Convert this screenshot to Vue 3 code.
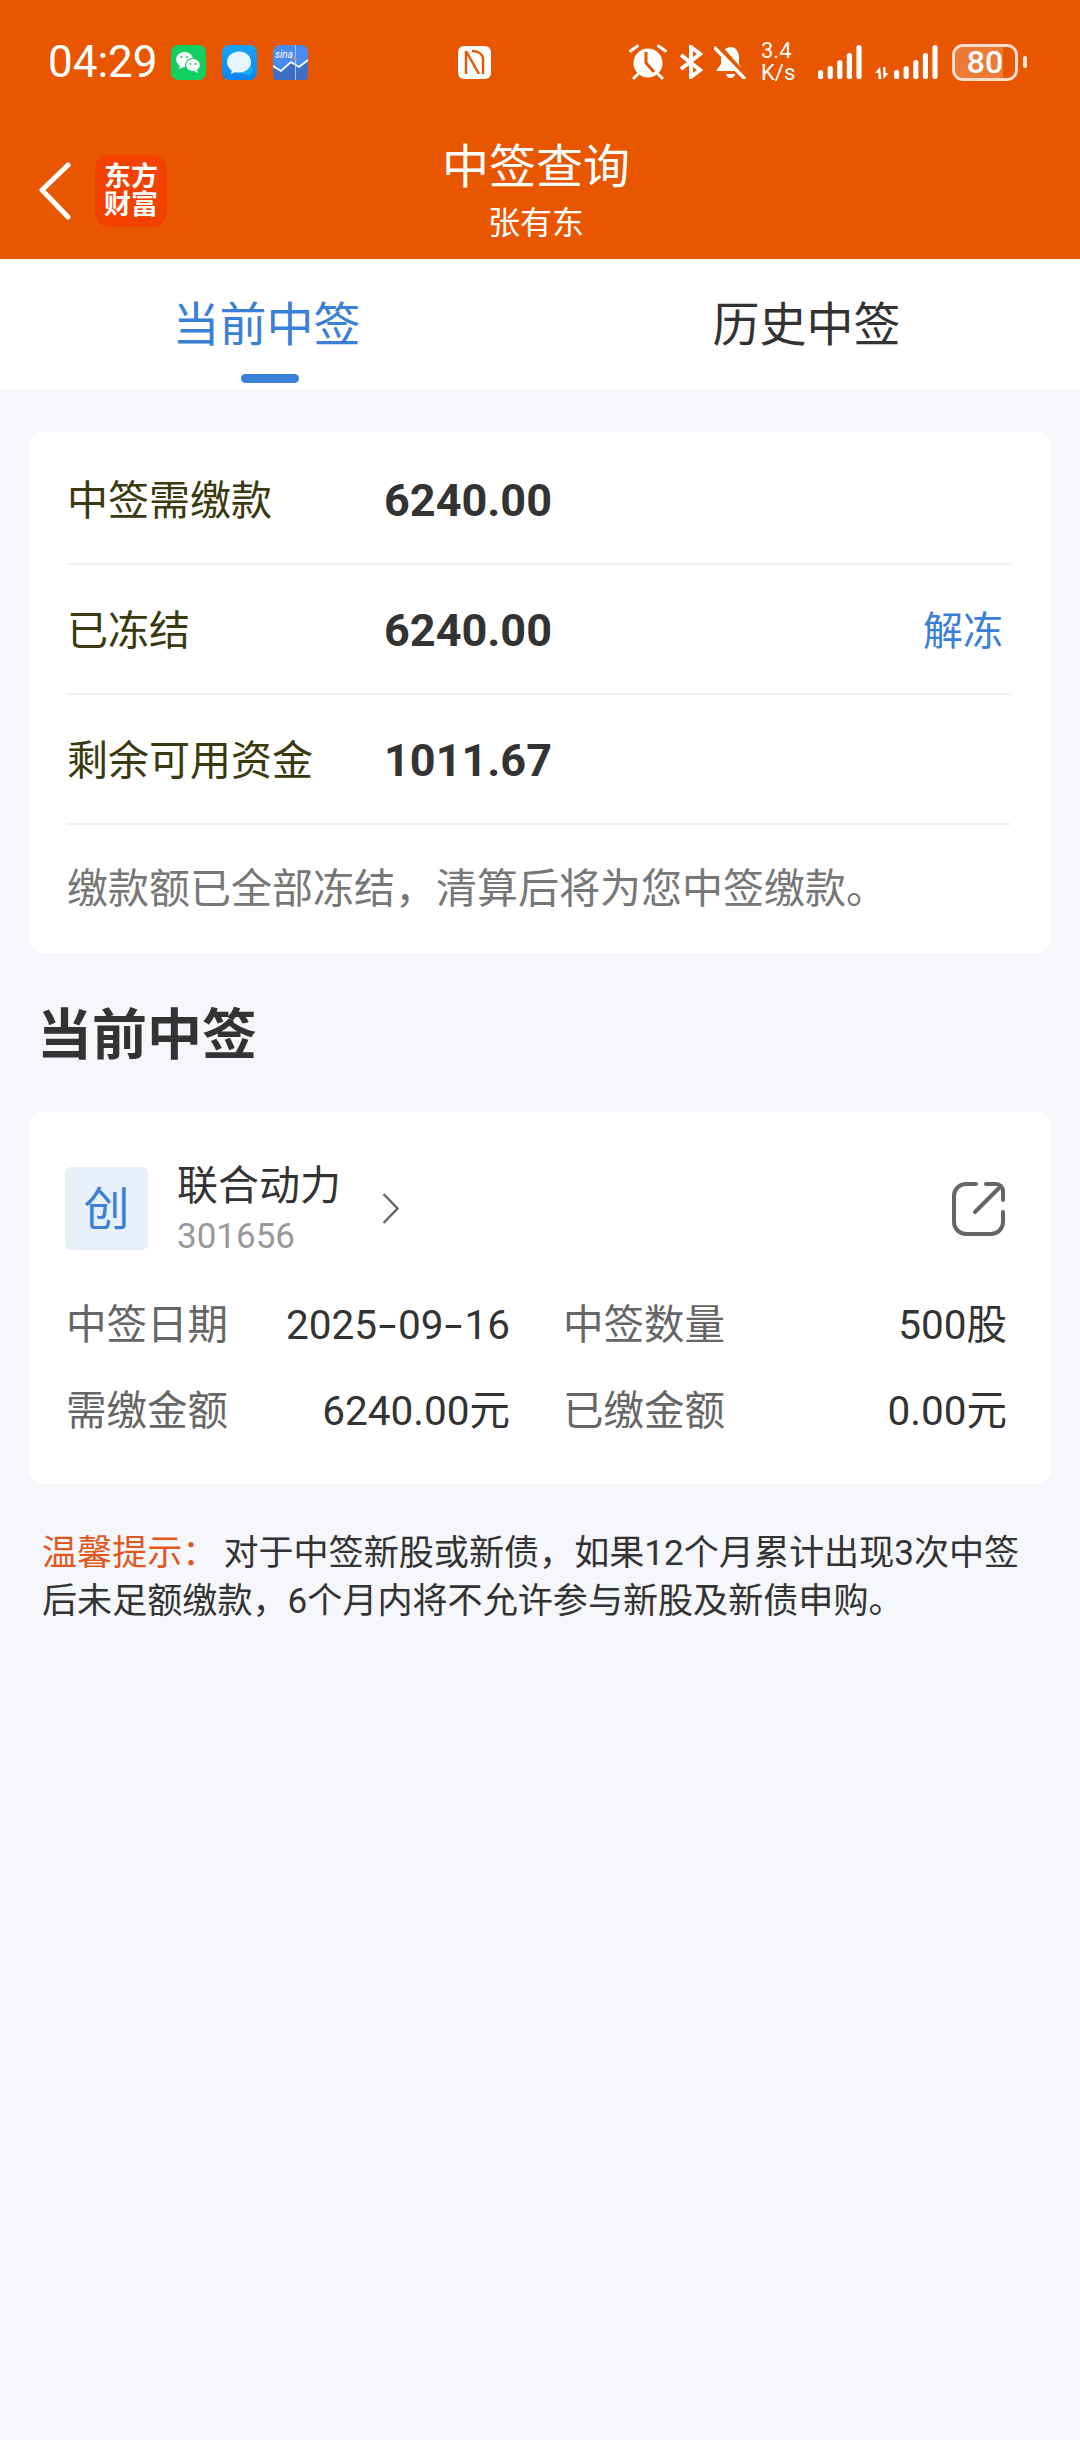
<script setup>
const battery = 80

const signalBars = [
  { x: 0, h: 9 },
  { x: 9.6, h: 13 },
  { x: 19.2, h: 19 },
  { x: 28.8, h: 26 },
  { x: 38.4, h: 34 }
]

const summary = [
  { label: '中签需缴款', value: '6240.00' },
  { label: '已冻结', value: '6240.00', action: '解冻' },
  { label: '剩余可用资金', value: '1011.67' }
]

const details = [
  { label: '中签日期', value: '2025-09-16' },
  { label: '中签数量', value: '500股' },
  { label: '需缴金额', value: '6240.00元' },
  { label: '已缴金额', value: '0.00元' }
]
</script>

<template>
  <div class="page">
    <header class="header">
      <div class="statusbar">
        <span class="time">04:29</span>

        <svg class="app-icon first" viewBox="0 0 35 35">
          <rect width="35" height="35" rx="7" fill="#12cf62" />
          <ellipse cx="13.5" cy="14.5" rx="8.5" ry="7.5" fill="#fff" />
          <path d="M9 20l-1 4 5-2z" fill="#fff" />
          <ellipse cx="22" cy="20" rx="7.5" ry="6.5" fill="#fff" stroke="#12cf62" stroke-width="1.2" />
          <path d="M26 25l1 3-4-2z" fill="#fff" />
          <circle cx="10.5" cy="12" r="1.1" fill="#12cf62" />
          <circle cx="16" cy="12" r="1.1" fill="#12cf62" />
          <circle cx="19.5" cy="19" r="1" fill="#12cf62" />
          <circle cx="24.5" cy="19" r="1" fill="#12cf62" />
        </svg>

        <svg class="app-icon" viewBox="0 0 35 35">
          <defs>
            <linearGradient id="msgBg" x1="0" y1="0" x2="0" y2="1">
              <stop offset="0" stop-color="#18a4f8" />
              <stop offset="1" stop-color="#0a86f0" />
            </linearGradient>
          </defs>
          <rect width="35" height="35" rx="7" fill="url(#msgBg)" />
          <ellipse cx="24" cy="24" rx="6.5" ry="5.5" fill="#12b2f0" />
          <path d="M27 27l3 3-6-1z" fill="#12b2f0" />
          <ellipse cx="17" cy="17" rx="12" ry="10.5" fill="#e6f5fe" />
          <path d="M10 24l-1 5 7-3z" fill="#e6f5fe" />
        </svg>

        <svg class="app-icon" viewBox="0 0 35 35">
          <rect width="35" height="35" rx="7" fill="#4b8bf0" />
          <path d="M0 23l8 4 10-10 8 6 9-7v14a7 7 0 0 1-7 7H7a7 7 0 0 1-7-7z" fill="#3f6fc4" />
          <path d="M0 21l8 5 10-9 8 5 9-7" fill="none" stroke="#fff" stroke-width="1.8" />
          <path d="M22.5 0v35" stroke="#c9d6ee" stroke-width="0.8" />
          <circle cx="22.5" cy="14" r="1.6" fill="#d69a55" />
          <text x="2" y="13" class="sina">sina</text>
        </svg>

        <svg class="nfc" viewBox="0 0 33 33">
          <rect width="33" height="33" rx="6" fill="#fff" />
          <path d="M8 5v23M8 5l13 23M14 5c6 0 11 3 11 8v15" fill="none" stroke="#e85600" stroke-width="2.4" />
        </svg>

        <div class="status-right">
          <svg class="alarm" viewBox="0 0 38 36">
            <circle cx="19" cy="19" r="14.5" fill="#fff" />
            <path d="M17 8v11l8 9" fill="none" stroke="#e85600" stroke-width="3" />
            <path d="M1.500 7l7-5M36.500 7l-7-5M5 34l3.500-3.500M33 34l-3.500-3.500" stroke="#fff" stroke-width="3" stroke-linecap="round" />
          </svg>

          <svg class="bt" viewBox="0 0 26 34">
            <path d="M3 10l19 15-9 7V2l9 7L3 24" fill="none" stroke="#fff" stroke-width="4" />
          </svg>

          <svg class="bell" viewBox="0 0 32 34">
            <path d="M17 2c-6 0-10 5-10 11v6l-5 7h27l-4-7v-6c0-6-3-11-8-11z" fill="#fff" />
            <path d="M12 29a4.500 4 0 0 0 9 0z" fill="#fff" />
            <path d="M3 1l28 31" stroke="#e85600" stroke-width="7" />
            <path d="M1 3l29 30" stroke="#fff" stroke-width="3.500" stroke-linecap="round" />
          </svg>

          <div class="speed">
            <span>3.4</span>
            <span>K/s</span>
          </div>

          <svg class="signal" viewBox="0 0 44 34">
            <rect v-for="b in signalBars" :key="b.x" :x="b.x" :y="34 - b.h" width="5.200" :height="b.h" rx="2.600" fill="#fff" />
          </svg>

          <svg class="signal-data" viewBox="0 0 64 34">
            <path d="M5 22l-5 6H3.500v6H6.500zM8.500 34l5-6H10.500V22H8z" fill="#fff" />
            <g transform="translate(19 0)">
              <rect v-for="b in signalBars" :key="b.x" :x="b.x" :y="34 - b.h" width="5.200" :height="b.h" rx="2.600" fill="#fff" />
            </g>
          </svg>

          <div class="battery">
            <div class="battery-fill" :style="{ width: battery + '%' }"></div>
            <span class="battery-num">{{ battery }}</span>
          </div>
          <div class="battery-tip"></div>
        </div>
      </div>

      <nav class="nav">
        <div class="nav-left">
          <svg class="back" viewBox="0 0 34 58">
            <path d="M30 3L4 28l26 27" fill="none" stroke="#fff" stroke-width="5" stroke-linecap="round" stroke-linejoin="round" />
          </svg>
          <div class="logo">
            <span>东方</span>
            <span>财富</span>
          </div>
        </div>
        <div class="nav-title">
          <div class="title">中签查询</div>
          <div class="subtitle">张有东</div>
        </div>
        <div></div>
      </nav>
    </header>

    <div class="tabs">
      <div class="tab active">
        <span class="tab-text">当前中签</span>
        <i class="tab-bar"></i>
      </div>
      <div class="tab">
        <span class="tab-text">历史中签</span>
      </div>
    </div>

    <section class="card summary">
      <div v-for="row in summary" :key="row.label" class="sum-row">
        <span class="sum-label">{{ row.label }}</span>
        <span class="sum-value">{{ row.value }}</span>
        <span v-if="row.action" class="sum-action">{{ row.action }}</span>
      </div>
      <div class="sum-note">缴款额已全部冻结，清算后将为您中签缴款。</div>
    </section>

    <h2 class="section-title">当前中签</h2>

    <section class="card stock">
      <div class="stock-head">
        <div class="badge">创</div>
        <div class="stock-name">
          <div class="name">联合动力</div>
          <div class="code">301656</div>
        </div>
        <svg class="chevron" viewBox="0 0 17 31">
          <path d="M1.500 1l14 14.500-14 14.500" fill="none" stroke="#666" stroke-width="2.400" />
        </svg>
        <svg class="share" viewBox="0 0 53 54">
          <path d="M24 2H14A12 12 0 0 0 2 14v26a12 12 0 0 0 12 12h25a12 12 0 0 0 12-12V30M34 2h10a7 7 0 0 1 7 7v9M23 30L49 4" fill="none" stroke="#666" stroke-width="4" stroke-linecap="round" />
        </svg>
      </div>
      <div class="detail-grid">
        <div v-for="d in details" :key="d.label" class="detail">
          <span class="detail-label">{{ d.label }}</span>
          <!-- hyphens in the date are drawn wider than the font's own -->
          <span class="detail-value"><template v-for="(part, i) in d.value.split('-')" :key="i"><span v-if="i" class="dash">-</span>{{ part }}</template></span>
        </div>
      </div>
    </section>

    <p class="tip"><span class="tip-label">温馨提示：</span>对于中签新股或新债，如果12个月累计出现3次中签后未足额缴款，6个月内将不允许参与新股及新债申购。</p>
  </div>
</template>

<style>
html,
body {
  margin: 0;
  background: #f6f7fa;
}
</style>

<style scoped>
.page {
  min-height: 2440px;
  background: #f6f7fa;
  font-family: Roboto, "Noto Sans CJK SC", sans-serif;
  color: #333;
  overflow: hidden;
}

.header {
  height: 259px;
  background: #e85600;
  color: #fff;
}

.statusbar {
  display: flex;
  align-items: center;
  height: 36px;
  padding: 44px 53px 30px 48px;
}

.time {
  font-size: 44px;
  font-weight: 400;
  line-height: 36px;
  width: 109px;
}

.app-icon {
  width: 35px;
  height: 35px;
  margin-left: 16px;
}

.app-icon.first {
  margin-left: 14px;
}

.sina {
  font-size: 10px;
  font-style: italic;
  fill: #fff;
}

.nfc {
  width: 33px;
  height: 33px;
  margin-left: 150px;
}

.status-right {
  display: flex;
  align-items: center;
  margin-left: auto;
}

.alarm {
  width: 38px;
  height: 36px;
}

.bt {
  width: 26px;
  height: 34px;
  margin-left: 11px;
}

.bell {
  width: 32px;
  height: 34px;
  margin-left: 10px;
}

.speed {
  display: flex;
  flex-direction: column;
  width: 36px;
  margin-left: 15px;
  font-size: 22px;
  line-height: 22px;
}

.signal {
  width: 44px;
  height: 34px;
  margin-left: 21px;
}

.signal-data {
  width: 64px;
  height: 34px;
  margin-left: 13px;
}

.battery {
  position: relative;
  width: 66px;
  height: 37px;
  margin-left: 13px;
  box-sizing: border-box;
  border: 3px solid rgba(255, 255, 255, 0.8);
  border-radius: 11px;
  display: flex;
  align-items: center;
  justify-content: center;
  overflow: hidden;
}

.battery-fill {
  position: absolute;
  left: 0;
  top: 0;
  bottom: 0;
  background: rgba(255, 255, 255, 0.22);
}

.battery-num {
  position: relative;
  font-size: 32px;
  font-weight: 500;
  line-height: 1;
}

.battery-tip {
  width: 4px;
  height: 12px;
  margin-left: 5px;
  border-radius: 2px;
  background: rgba(255, 255, 255, 0.85);
}

.nav {
  display: grid;
  grid-template-columns: 1fr auto 1fr;
  height: 149px;
  padding-right: 8px;
}

.nav-left {
  display: flex;
  align-items: center;
  height: 149px;
  box-sizing: border-box;
  padding: 12px 0 0 38px;
}

.back {
  width: 34px;
  height: 58px;
}

.logo {
  display: flex;
  flex-direction: column;
  align-items: center;
  justify-content: center;
  width: 72px;
  height: 72px;
  margin-left: 23px;
  border-radius: 14px;
  background: #f34100;
  font-size: 27px;
  font-weight: 700;
  line-height: 28px;
}

.nav-title {
  text-align: center;
  padding-top: 32px;
}

.title {
  font-size: 47px;
  line-height: 50px;
}

.subtitle {
  font-size: 32px;
  line-height: 36px;
  margin-top: 13px;
}

.tabs {
  display: flex;
  height: 130px;
  background: #fff;
}

.tab {
  flex: 1;
  text-align: center;
}

.tab-text {
  display: block;
  margin-right: 7px;
  padding-top: 41px;
  font-size: 47px;
  line-height: 50px;
}

.tab.active .tab-text {
  color: #3a80d8;
}

.tab-bar {
  display: block;
  width: 58px;
  height: 9px;
  margin: 24px auto 0;
  border-radius: 5px;
  background: #3a80d8;
}

.card {
  margin: 0 29px;
  background: #fff;
  border-radius: 14px;
}

.summary {
  margin-top: 43px;
  padding: 3px 40px 0 38px;
  height: 521px;
  box-sizing: border-box;
}

.sum-row {
  display: flex;
  align-items: center;
  height: 130px;
  box-sizing: border-box;
  border-bottom: 2px solid #f0f1f3;
}

.sum-label {
  width: 317px;
  margin-top: -4px;
  font-size: 41px;
  color: #3a3a0e;
}

.sum-value {
  margin-top: 2px;
  font-size: 45px;
  font-weight: 700;
  color: #333;
}

.sum-action {
  margin-left: auto;
  margin-right: 8px;
  margin-top: -2px;
  font-size: 40px;
  color: #3a80d8;
}

.sum-note {
  height: 122px;
  padding-top: 3px;
  box-sizing: border-box;
  font-size: 41px;
  line-height: 122px;
  color: #777;
}

.section-title {
  margin: 0;
  padding: 52px 0 0 37px;
  height: 107px;
  font-size: 55px;
  font-weight: 700;
  line-height: 60px;
  color: #333;
}

.stock {
  height: 372px;
  padding: 55px 44px 0 36px;
  box-sizing: border-box;
}

.stock-head {
  display: flex;
  align-items: center;
  height: 83px;
}

.badge {
  width: 83px;
  height: 83px;
  border-radius: 6px;
  background: #e8f1fb;
  color: #3a80d8;
  font-size: 46px;
  line-height: 85px;
  text-align: center;
}

.stock-name {
  margin-left: 29px;
}

.name {
  font-size: 41px;
  line-height: 50px;
  margin-top: -1px;
  color: #333;
}

.code {
  margin-top: 8px;
  font-size: 35px;
  line-height: 36px;
  color: #999;
}

.chevron {
  width: 17px;
  height: 31px;
  margin-left: 41px;
}

.share {
  width: 53px;
  height: 54px;
  margin-left: auto;
  margin-right: 2px;
}

.detail-grid {
  display: grid;
  grid-template-columns: 1fr 1fr;
  column-gap: 53px;
  margin: 32px 0 0 1px;
}

.detail {
  display: flex;
  justify-content: space-between;
  line-height: 86px;
  font-size: 40.5px;
}

.detail-label {
  color: #666;
}

.detail-value {
  color: #333;
}

.dash {
  display: inline-block;
  width: 21px;
  text-align: center;
  transform: scaleX(1.6);
}

.tip {
  margin: 45px 40px 0 42px;
  font-size: 35.1px;
  line-height: 48px;
  color: #333;
}

.tip-label {
  margin-right: 6px;
  color: #e2571e;
}
</style>
